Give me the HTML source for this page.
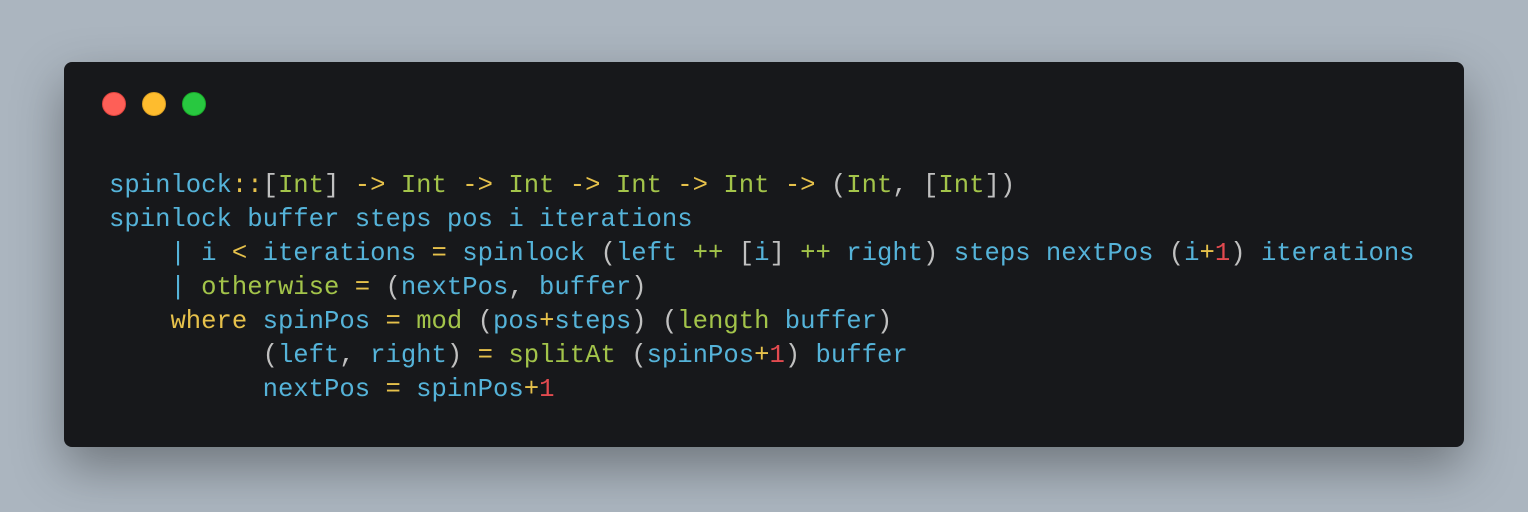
<!DOCTYPE html>
<html><head><style>
body{margin:0;width:1528px;height:512px;background:#abb5bf;overflow:hidden;position:relative}
.win{position:absolute;left:64px;top:62px;width:1400px;height:385px;background:#17181b;border-radius:8px;box-shadow:0 20px 50px rgba(0,0,0,.35)}
.d{position:absolute;top:30px;width:24px;height:24px;border-radius:50%}
pre{position:absolute;left:45px;top:107px;margin:0;font-family:"Liberation Mono",monospace;font-size:25.6px;line-height:34px;color:#55b3d9}
.g{color:#a3c44a}.y{color:#e6c14b}.w{color:#c0c0c0}.r{color:#e24a4f}
</style></head><body>
<div class="win">
<div class="d" style="left:38px;background:#fe5f57;border:1px solid #e0443e;box-sizing:border-box"></div>
<div class="d" style="left:78px;background:#febc2e;border:1px solid #dea123;box-sizing:border-box"></div>
<div class="d" style="left:118px;background:#28c840;border:1px solid #1aab29;box-sizing:border-box"></div>
<pre>spinlock<span class="y">::</span><span class="w">[</span><span class="g">Int</span><span class="w">]</span> <span class="y">-&gt;</span> <span class="g">Int</span> <span class="y">-&gt;</span> <span class="g">Int</span> <span class="y">-&gt;</span> <span class="g">Int</span> <span class="y">-&gt;</span> <span class="g">Int</span> <span class="y">-&gt;</span> <span class="w">(</span><span class="g">Int</span><span class="w">,</span> <span class="w">[</span><span class="g">Int</span><span class="w">])</span>
spinlock buffer steps pos i iterations
    | i <span class="y">&lt;</span> iterations <span class="y">=</span> spinlock <span class="w">(</span>left <span class="g">++</span> <span class="w">[</span>i<span class="w">]</span> <span class="g">++</span> right<span class="w">)</span> steps nextPos <span class="w">(</span>i<span class="y">+</span><span class="r">1</span><span class="w">)</span> iterations
    | <span class="g">otherwise</span> <span class="y">=</span> <span class="w">(</span>nextPos<span class="w">,</span> buffer<span class="w">)</span>
    <span class="y">where</span> spinPos <span class="y">=</span> <span class="g">mod</span> <span class="w">(</span>pos<span class="y">+</span>steps<span class="w">)</span> <span class="w">(</span><span class="g">length</span> buffer<span class="w">)</span>
          <span class="w">(</span>left<span class="w">,</span> right<span class="w">)</span> <span class="y">=</span> <span class="g">splitAt</span> <span class="w">(</span>spinPos<span class="y">+</span><span class="r">1</span><span class="w">)</span> buffer
          nextPos <span class="y">=</span> spinPos<span class="y">+</span><span class="r">1</span></pre>
</div>
</body></html>
